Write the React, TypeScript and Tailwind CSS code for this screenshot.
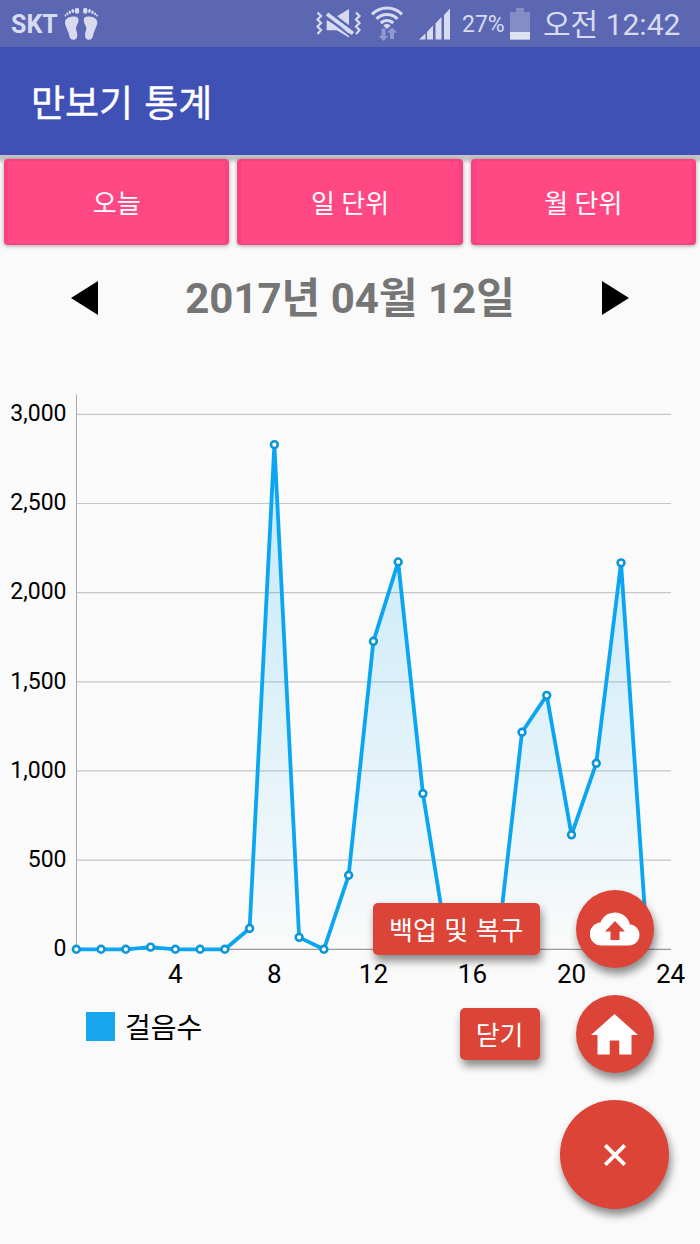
import React from 'react';

const STEPS = [
  0, 0, 0, 12, 0, 0, 0, 117, 2830, 67, 0, 415, 1727, 2172, 873, 10, 0, 0, 1217, 1424, 642, 1043,
  2167, 140,
];

const LEFT = 76.3;
const BOTTOM = 584.3;
const toX = (hour: number) => LEFT + hour * 24.76;
const toY = (steps: number) => BOTTOM - steps * 0.17833;

const FootIcon: React.FC = () => (
  <svg className="h-[34px] w-[34px]" viewBox="0 0 34 34" fill="#d8dbef">
    <g id="foot">
      <path d="M9 9.500c4-.5 6 1 5.500 4.500-.3 3-2.300 4.500-2.500 7-.2 2.500 1.300 4 1.300 7 0 3-1.300 4.700-3.800 4.700-2.700 0-4-2-4.500-5C4.500 24 1 19 1 15.500 1 11.500 4.500 10 9 9.500z" />
      <ellipse cx="13" cy="3.800" rx="2.200" ry="3" />
      <ellipse cx="8.800" cy="4" rx="1.400" ry="2" transform="rotate(-10 8.800 4)" />
      <ellipse cx="5.800" cy="5.300" rx="1.200" ry="1.700" transform="rotate(-20 5.800 5.300)" />
      <ellipse cx="3.300" cy="6.900" rx="1" ry="1.500" transform="rotate(-30 3.300 6.900)" />
      <ellipse cx="1.400" cy="8.600" rx=".9" ry="1.100" />
    </g>
    <use href="#foot" transform="translate(34.300 0) scale(-1 1)" />
  </svg>
);

const MuteIcon: React.FC = () => (
  <svg className="h-[30px] w-[46px]" viewBox="0 0 46 30">
    <g fill="none" stroke="#d8dbef" strokeWidth="2.200">
      <path d="M1.500 3.500l3.500 3.500-3.500 3.500L5 14l-3.500 3.500L5 21l-3.500 4" />
      <path d="M40 3.500l3.500 3.500-3.500 3.500 3.500 3.500-3.500 3.500 3.500 3.500-3.500 4" />
    </g>
    <path fill="#d8dbef" d="M10.700 11v10.300h10L33 28.500V23zM21 7.300L33 0v18z" />
    <path d="M14 3.500L40 23" stroke="#5c67b3" strokeWidth="2.500" />
    <path d="M9.500 8L36 28" stroke="#5c67b3" strokeWidth="2" />
    <path d="M11 5L37 24.500" stroke="#d8dbef" strokeWidth="3.800" />
  </svg>
);

const WifiIcon: React.FC = () => (
  <svg className="h-[35px] w-[32px]" viewBox="0 0 32 35">
    <g fill="none" stroke="#d8dbef" strokeWidth="3.200">
      <path d="M1 8.300a21 21 0 0 1 30 0" />
      <path d="M5.500 12.800a15 15 0 0 1 21 0" />
      <path d="M9.800 17a9 9 0 0 1 12.400 0" />
    </g>
    <path fill="#d8dbef" d="M12.300 19.500a5.500 5.500 0 0 1 7.400 0L16 23z" />
    <path fill="#9199cd" d="M10.500 22.500h4V30h3l-5 5-5-5h3zM19 33v-6.500h-3l5-5 5 5h-3V33z" />
  </svg>
);

const SignalIcon: React.FC = () => (
  <svg className="h-[32px] w-[32px]" viewBox="0 0 32 32" fill="#d8dbef">
    <path d="M0 31.500l6.500-6V31.500zM8 24l6-6.500v14H8zM16.500 15.500l6-6.500v22.500h-6zM25 7l6-6.500v31h-6z" />
  </svg>
);

const CloudIcon: React.FC = () => (
  <svg className="h-[34px] w-[50px]" viewBox="0 0 50 34">
    <path
      fill="white"
      d="M12 33.500a11.500 11.500 0 0 1-1.500-23C13 4 18.500.5 25 .5c7.500 0 13.500 5 15 12 5.500.5 9.500 4.800 9.500 10.300 0 6-4.500 10.700-10.500 10.700z"
    />
    <path fill="#db4437" d="M25 9l10 10.500h-5.500V28h-9v-8.500H15z" />
  </svg>
);

const HomeIcon: React.FC = () => (
  <svg className="h-[41px] w-[47px]" viewBox="0 0 47 41">
    <path fill="white" d="M23.500 0L47 21h-6.500v19.500H28.300V26.500h-9.600v14H6.500V21H0z" />
  </svg>
);

const StatusBar: React.FC = () => (
  <div className="flex h-[47px] items-center justify-between bg-[#5c67b3] pl-[11px] pr-[19px] text-[#d8dbef]">
    <div className="flex items-center gap-[6px]">
      <span className="pt-[2px] text-[25px] font-bold leading-none">SKT</span>
      <FootIcon />
    </div>
    <div className="flex items-center">
      <MuteIcon />
      <div className="ml-[9px]"><WifiIcon /></div>
      <div className="ml-[16px]"><SignalIcon /></div>
      <span className="ml-[11px] w-[45px] whitespace-nowrap pt-[1px] text-[23px] leading-none">27%</span>
      <svg className="ml-[3px] h-[32px] w-[20px]" viewBox="0 0 20 32">
        <path fill="#858dc6" d="M6 0h8v4h6v28H0V4h6z" />
        <path fill="#dfe2f3" d="M0 24h20v7.500H0z" />
      </svg>
      <span className="ml-[13px] w-[138px] whitespace-nowrap pt-[3px] text-[30px] leading-none">오전 12:42</span>
    </div>
  </div>
);

const PeriodButton: React.FC<{ label: string }> = ({ label }) => (
  <button className="h-[86px] flex-1 rounded-[4px] border-x-[4px] border-y-[2px] border-[#f9417e] bg-[#ff4884] pt-[4px] text-[26px] leading-none text-white shadow-[0_1px_4px_rgba(0,0,0,0.35)]">
    {label}
  </button>
);

const StepChart: React.FC = () => {
  const points = STEPS.map((s, i) => `${toX(i)},${toY(s)}`).join(' ');

  return (
    <svg className="block h-[640px] w-[700px]" viewBox="0 0 700 640">
      <defs>
        <linearGradient id="area" x1="0" y1="30" x2="0" y2="585" gradientUnits="userSpaceOnUse">
          <stop offset="0" stopColor="#03a9f4" stopOpacity="0.24" />
          <stop offset="0.5" stopColor="#03a9f4" stopOpacity="0.13" />
          <stop offset="1" stopColor="#03a9f4" stopOpacity="0" />
        </linearGradient>
      </defs>

      {[0, 500, 1000, 1500, 2000, 2500, 3000].map((v) => (
        <g key={v}>
          <line x1="76" x2="671" y1={toY(v)} y2={toY(v)} stroke={v ? '#c6c6c6' : '#999999'} strokeWidth="1.200" />
          <text x="66.500" y={toY(v) + 6.800} textAnchor="end" fontSize="23">
            {v.toLocaleString('en-US')}
          </text>
        </g>
      ))}
      <line x1="76.500" x2="76.500" y1="29.500" y2="584" stroke="#aaaaaa" />

      <polygon points={`${toX(0)},${BOTTOM} ${points} ${toX(23)},${BOTTOM}`} fill="url(#area)" />
      <polyline points={points} fill="none" stroke="#0ba6f2" strokeWidth="3.800" strokeLinejoin="bevel" />
      {STEPS.map((s, i) => (
        <circle key={i} cx={toX(i)} cy={toY(s)} r="3.400" fill="white" stroke="#0d96d6" strokeWidth="2.600" />
      ))}

      {[4, 8, 12, 16, 20, 24].map((h) => (
        <text key={h} x={toX(h)} y="617.500" textAnchor="middle" fontSize="26">
          {h}
        </text>
      ))}
    </svg>
  );
};

const MenuItem: React.FC<{ label: string; children: React.ReactNode }> = ({ label, children }) => (
  <div className="flex items-center gap-[36px] pr-[15.500px]">
    <span className="flex h-[52px] items-center whitespace-nowrap rounded-[5px] bg-[#db4437] px-[16px] pt-[4px] text-[26px] leading-none text-white shadow-[2px_6px_9px_rgba(0,0,0,0.45)] [word-spacing:1px]">
      {label}
    </span>
    <button className="flex h-[78px] w-[78px] items-center justify-center rounded-full bg-[#db4437] shadow-[2px_6px_9px_rgba(0,0,0,0.45)]">
      {children}
    </button>
  </div>
);

export default function App() {
  return (
    <div className="relative h-[1244px] w-[700px] overflow-hidden bg-[#fafafa] font-[Roboto,'Noto_Sans_CJK_KR',sans-serif]">
      <StatusBar />
      <header className="flex h-[108px] items-center bg-[#3f51b5] pl-[31px] pt-[6px]">
        <h1 className="text-[37px] font-normal leading-none text-white [-webkit-text-stroke:0.4px_white] [word-spacing:2px]">만보기 통계</h1>
      </header>

      <div className="flex gap-[8px] bg-linear-to-b from-[#c4c4c4] from-[4px] to-[#fafafa] to-[9px] px-[4px] pt-[4px]">
        <PeriodButton label="오늘" />
        <PeriodButton label="일 단위" />
        <PeriodButton label="월 단위" />
      </div>

      <div className="flex h-[105px] items-center justify-between px-[71px]">
        <svg className="h-[34px] w-[27px]" viewBox="0 0 27 34">
          <path d="M27 0v34L0 17z" />
        </svg>
        <span className="pt-[3px] text-[42px] font-bold leading-none text-[#757575]">2017년 04월 12일</span>
        <svg className="h-[34px] w-[27px]" viewBox="0 0 27 34">
          <path d="M0 0l27 17L0 34z" />
        </svg>
      </div>

      <div className="pt-[15px]">
        <StepChart />
      </div>
      <div className="flex items-center gap-[10px] pl-[86px] pt-[7px]">
        <div className="h-[29px] w-[29px] bg-[#18a6ef]" />
        <span className="-mb-[5px] text-[28px] leading-none">걸음수</span>
      </div>

      {/* Floating action menu */}
      <div className="absolute bottom-[35px] right-[31px] flex flex-col items-end gap-[27px]">
        <MenuItem label="백업 및 복구"><CloudIcon /></MenuItem>
        <MenuItem label="닫기"><HomeIcon /></MenuItem>
        <button className="flex h-[109px] w-[109px] items-center justify-center rounded-full bg-[#db4437] shadow-[2px_6px_9px_rgba(0,0,0,0.45)]">
          <svg className="h-[22px] w-[22px]" viewBox="0 0 22 22" stroke="white" strokeWidth="3.800">
            <path d="M1.300 1.300l19.400 19.400M20.700 1.300L1.300 20.700" />
          </svg>
        </button>
      </div>
    </div>
  );
}
